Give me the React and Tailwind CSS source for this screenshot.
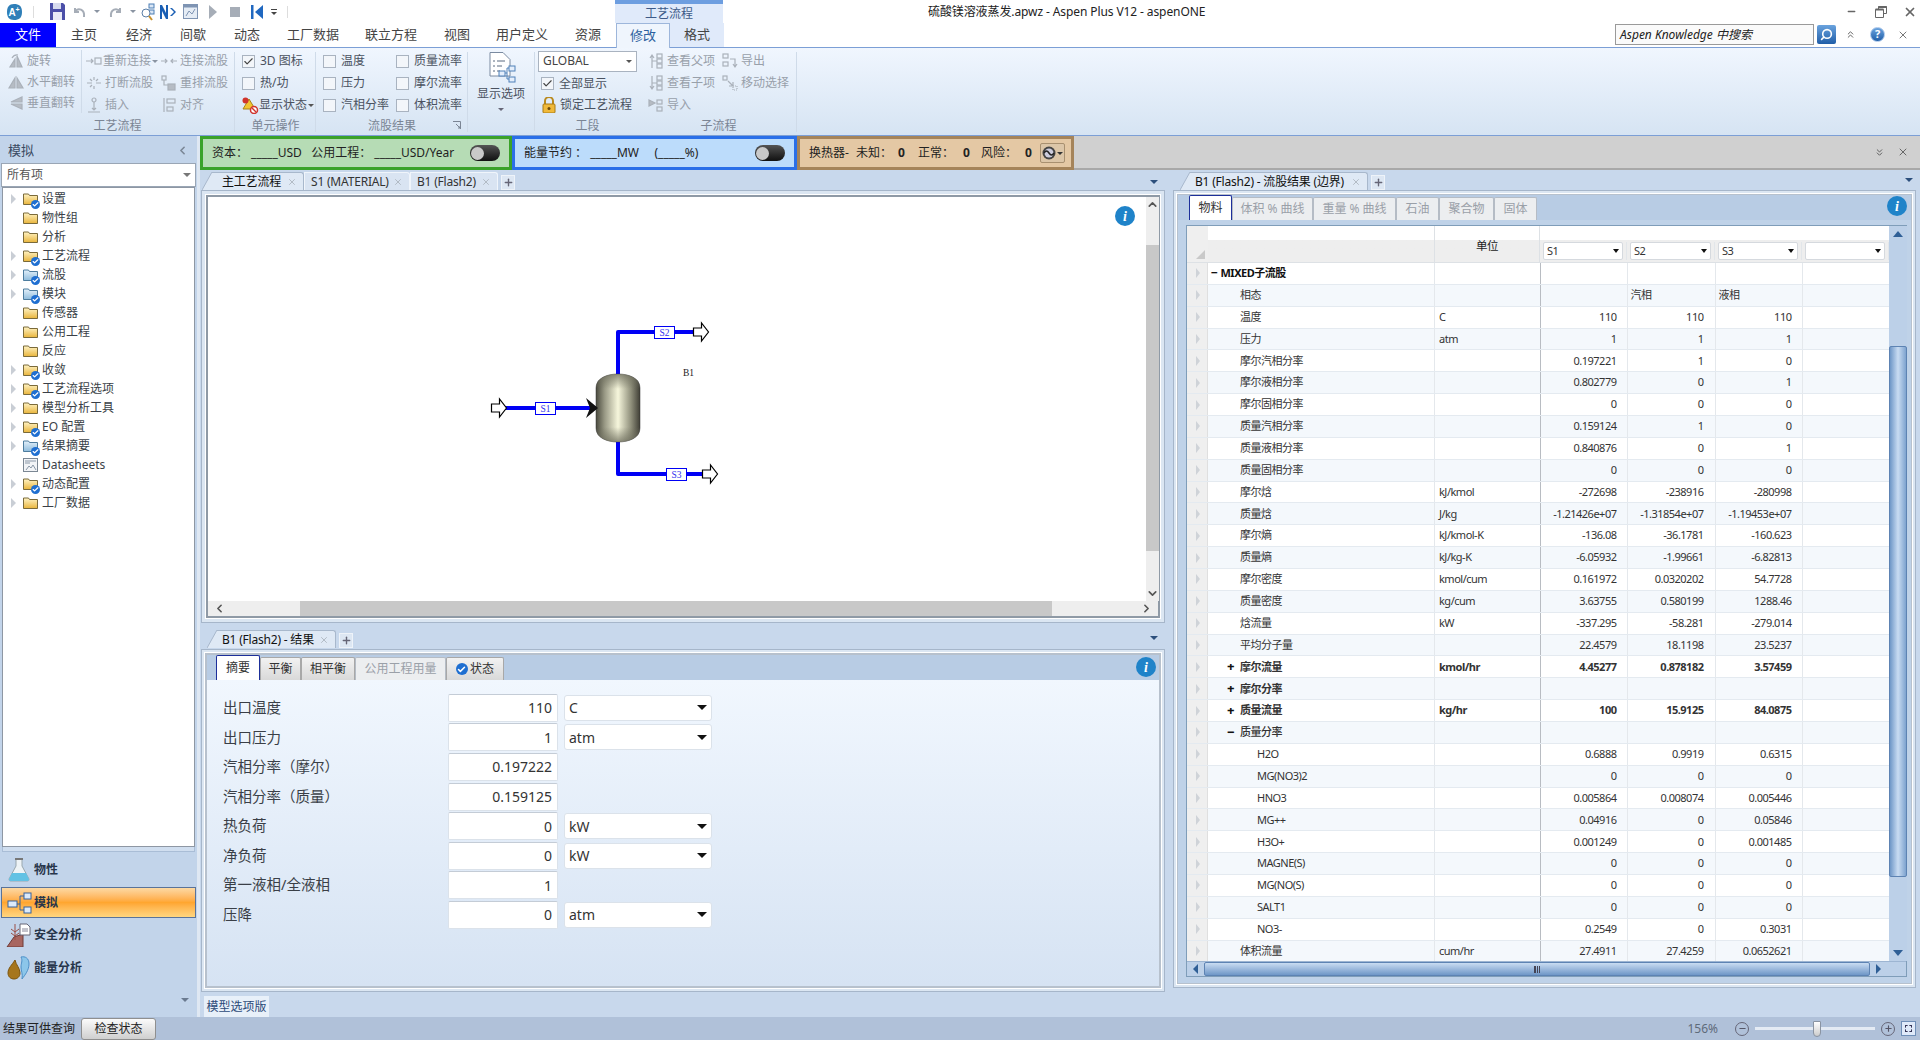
import React from "react";
import { Check, ChevronDown, ChevronUp, ChevronLeft, ChevronRight, ChevronsUp, ChevronsDown, Minus, Plus, X, Search } from "lucide-react";

const G = ({ children, s = 16, className = "" }) => (
  <svg width={s} height={s} viewBox="0 0 16 16" fill="none" stroke="#aab1ba" strokeWidth="1.2" className={`shrink-0 ${className}`}>{children}</svg>
);

const icons = {
  rotate: <G><path d="M2 14h5V6zM14 14H9V3z" fill="#b6bcc4" /><path d="M4 5a6 6 0 0 1 6-3" /></G>,
  flipH: <G><path d="M7 14H1l6-10zM9 14h6L9 4z" fill="#b6bcc4" /></G>,
  flipV: <G><path d="M14 7V2L3 7zM14 9v5L3 9z" fill="#b6bcc4" /></G>,
  reconnect: <G><path d="M0 8h7M5 6l2 2-2 2" /><rect x="9" y="5" width="6" height="6" /></G>,
  connect: <G><path d="M0 8h6M4 6l2 2-2 2M16 8h-6M12 6l-2 2 2 2" /></G>,
  brk: <G><path d="M1 8h5M10 8h5M8 2v3M8 11v3M4 4l2 2M12 4l-2 2M4 12l2-2" /></G>,
  reorder: <G><rect x="1" y="1" width="4" height="4" /><rect x="7" y="9" width="7" height="6" fill="#b6bcc4" /><path d="M3 5v5h4" /></G>,
  insert: <G><circle cx="8" cy="3" r="2" /><path d="M8 5v8M6 11l2 2 2-2M2 15h12" /></G>,
  align: <G><path d="M3 1v14" /><rect x="6" y="2" width="8" height="4" /><rect x="6" y="10" width="6" height="4" /></G>,
  parent: <G><rect x="9" y="1" width="5" height="4" /><rect x="9" y="6" width="5" height="4" /><rect x="9" y="11" width="5" height="4" /><path d="M4 15V3M2 5l2-3 2 3M4 8h5" /></G>,
  child: <G><rect x="9" y="1" width="5" height="4" /><rect x="9" y="6" width="5" height="4" /><rect x="9" y="11" width="5" height="4" /><path d="M4 1v13M2 11l2 3 2-3M4 8h5" /></G>,
  imp: <G><path d="M1 3l6 3-6 3z" fill="#b6bcc4" /><rect x="9" y="3" width="5" height="4" /><rect x="9" y="10" width="5" height="4" /></G>,
  exp: <G><rect x="1" y="1" width="5" height="4" /><rect x="1" y="9" width="5" height="4" /><path d="M8 6h5v7M11 11l2 3 2-3" /></G>,
  move: <G><rect x="1" y="1" width="4" height="4" /><path d="M6 6l5 5M11 7v4H7" /><rect x="11" y="11" width="4" height="4" strokeDasharray="1 1" /></G>,
};

const Item = ({ icon, label, w }) => (
  <div className="h-[22px] flex items-center gap-[3px] text-[12px] text-[#98a0aa] whitespace-nowrap">
    <span className={`flex justify-center ${w || "w-[16px]"}`}>{icons[icon]}</span>
    <span>{label}</span>
  </div>
);

const Cb = ({ checked, label, gap = "gap-[5px]" }) => (
  <div className={`h-[22px] flex items-center ${gap} text-[12px] text-[#4a5260] whitespace-nowrap`}>
    <span className="w-[13px] h-[13px] border border-[#a9b3c0] bg-[#f3f6fa] flex items-center justify-center shrink-0">
      {checked && <Check size={11} strokeWidth={2.5} color="#444" />}
    </span>
    <span>{label}</span>
  </div>
);

const Group = ({ w, label, children, last, dialog }) => (
  <div className={`${w} shrink-0 flex flex-col h-full relative`}>
    <div className="h-[68px] pt-[2px] flex">{children}</div>
    <div className="h-[19px] flex items-center justify-center text-[12px] text-[#7b8594]">{label}</div>
    {!last && <div className="absolute right-0 top-[4px] bottom-[3px] w-px bg-[#cfdbe9]" />}
    {dialog && <svg width="8" height="8" viewBox="0 0 8 8" className="absolute right-[7px] bottom-[6px]"><path d="M0 .5h7.5V8M3 3l4 4M5 7h2V5" fill="none" stroke="#7b8594" /></svg>}
  </div>
);

const QatCaret = ({ c = "#8a94a2", cls = "" }) => <span className={`w-0 h-0 border-x-[3px] border-x-transparent border-t-[3px] ${cls}`} style={{ borderTopColor: c }} />;

function TitleBar() {
  return (
    <div className="h-[23px] flex items-center shrink-0 bg-white relative">
      <svg width="18" height="18" viewBox="0 0 18 18" className="ml-[5px]"><path d="M9 1c5 0 8 2 8 8s-3 8-8 8-7-3-7-8 2-8 7-8z" fill="#2f7fb8" /><text x="3.5" y="13" fontSize="10" fontWeight="700" fill="#fff" fontFamily="Liberation Sans">A</text><text x="10.5" y="9" fontSize="7" fontWeight="700" fill="#fff" fontFamily="Liberation Sans">+</text></svg>
      <span className="w-px h-[12px] bg-[#ddd] ml-[10px]" />
      <svg width="15" height="17" viewBox="0 0 15 17" className="ml-[16px]"><path d="M0 0h13l2 2v15H0z" fill="#4b4fa8" /><rect x="3" y="0" width="8" height="6" fill="#d7dbee" /><rect x="3" y="9" width="9" height="8" fill="#e8eaf6" /></svg>
      <svg width="13" height="13" viewBox="0 0 13 13" className="ml-[8px]"><path d="M2 3v4h4M2 7c3-5 10-3 9 5" fill="none" stroke="#a6adb7" strokeWidth="2" /></svg>
      <QatCaret cls="ml-[8px]" />
      <svg width="13" height="13" viewBox="0 0 13 13" className="ml-[9px]"><path d="M11 3v4H7M11 7C8 2 1 4 2 12" fill="none" stroke="#a6adb7" strokeWidth="2" /></svg>
      <QatCaret cls="ml-[8px]" />
      <svg width="16" height="18" viewBox="0 0 16 18" className="ml-[4px]"><rect x="9" y="1" width="5" height="4" fill="#dbe7f5" stroke="#4d7fb5" /><rect x="9" y="7" width="5" height="4" fill="#dbe7f5" stroke="#4d7fb5" /><circle cx="6" cy="10" r="4" fill="#fff" stroke="#5b7fa8" /><path d="M9 13l3 4" stroke="#c9922e" strokeWidth="2" /></svg>
      <svg width="17" height="16" viewBox="0 0 17 16" className="ml-[3px]"><path d="M1 15V1h2l4 8V1h2v14H7L3 7v8zM11 4h2l4 4-4 4h-2l4-4z" fill="#1a5fb4" /></svg>
      <svg width="15" height="15" viewBox="0 0 15 15" className="ml-[7px]"><rect x=".5" y=".5" width="14" height="14" fill="#e5ecf5" stroke="#7f94b3" /><rect x=".5" y=".5" width="14" height="3" fill="#7f94b3" /><path d="M3 12l3-5 3 3 3-5" fill="none" stroke="#7f94b3" /></svg>
      <span className="w-0 h-0 border-y-[7px] border-y-transparent border-l-[8px] border-l-[#a6adb7] ml-[11px]" />
      <span className="w-[10px] h-[10px] bg-[#a6adb7] ml-[13px]" />
      <svg width="12" height="14" viewBox="0 0 12 14" className="ml-[11px]"><path d="M0 0h2.500v14H0zM12 0v14L4 7z" fill="#2068c0" /></svg>
      <span className="ml-[8px] flex flex-col items-center gap-[2px]"><span className="w-[6px] h-px bg-[#444]" /><QatCaret c="#444" /></span>
      <span className="w-px h-[12px] bg-[#ddd] ml-[10px]" />
      <div className="ml-[327px] w-[108px] h-[23px] flex flex-col shrink-0">
        <div className="h-[4px] bg-[#6d9ee0]" />
        <div className="flex-1 bg-[#e0eafa] flex items-center justify-center text-[12px] text-[#3d5a88]">工艺流程</div>
      </div>
      <div className="ml-[205px] text-[12px] text-[#222] whitespace-nowrap tracking-[-0.1px]">硫酸镁溶液蒸发.apwz - Aspen Plus V12 - aspenONE</div>
      <div className="ml-auto flex items-center pr-[3px]">
        <Minus size={11} strokeWidth={3} color="#666" />
        <svg width="12" height="12" viewBox="0 0 12 12" className="ml-[18px]"><path d="M3.500 3V.5h8v7H9M.5 3.500h8v8h-8z" fill="none" stroke="#666" /><path d="M.5 3.500h8M3.500 1h8" stroke="#666" strokeWidth="2" /></svg>
        <X size={14} strokeWidth={3} color="#666" className="ml-[16px]" />
      </div>
    </div>
  );
}

function MenuTabs() {
  const tabs = [["主页", "w-[56px]"], ["经济", "w-[54px]"], ["间歇", "w-[54px]"], ["动态", "w-[54px]"], ["工厂数据", "w-[78px]"], ["联立方程", "w-[78px]"], ["视图", "w-[54px]"], ["用户定义", "w-[76px]"], ["资源", "w-[56px]"]];
  return (
    <div className="h-[25px] flex shrink-0 bg-white border-b border-[#7c9fd6] relative">
      <div className="w-[56px] bg-[#0000ff] text-white text-[13px] flex items-center justify-center">文件</div>
      {tabs.map(([t, w]) => <div key={t} className={`${w} shrink-0 flex items-center justify-center text-[13px] text-[#444]`}>{t}</div>)}
      <div className="w-[54px] h-[25px] bg-[#eff5fd] border border-b-0 border-[#9db6db] text-[13px] text-[#2c5f9e] flex items-center justify-center">修改</div>
      <div className="w-[54px] h-[24px] bg-[#e0eafa] text-[13px] text-[#444] flex items-center justify-center">格式</div>
      <div className="ml-auto flex items-center mb-[1px]">
        <div className="w-[199px] h-[21px] border border-[#9a9a9a] bg-[#fafafa] text-[12px] italic text-[#222] flex items-center pl-[4px]">Aspen Knowledge 中搜索</div>
        <div className="w-[19px] h-[19px] ml-[3px] rounded-[2px] bg-gradient-to-b from-[#6aa3de] to-[#1f5ea8] flex items-center justify-center"><Search size={13} strokeWidth={3} color="#fff" className="-scale-x-100" /></div>
        <ChevronsUp size={11} color="#555" className="ml-[9px]" />
        <div className="w-[15px] h-[15px] ml-[14px] rounded-full bg-gradient-to-b from-[#6aa3de] to-[#1f5ea8] border border-[#a8c5ea] text-white text-[11px] font-bold flex items-center justify-center">?</div>
        <X size={12} strokeWidth={2} color="#777" className="ml-[12px] mr-[11px]" />
      </div>
    </div>
  );
}

function Ribbon() {
  return (
    <div className="h-[88px] shrink-0 flex bg-gradient-to-b from-[#f0f6fe] to-[#d6e4f3] border-b border-[#7c9fd6]">
      <Group w="w-[235px]" label="工艺流程">
        <div className="pl-[8px] w-[82px] shrink-0 flex flex-col border-r border-[#cfdbe9] mb-[3px]">
          <Item icon="rotate" label="旋转" /><Item icon="flipH" label="水平翻转" /><Item icon="flipV" label="垂直翻转" />
        </div>
        <div className="pl-[4px] w-[78px] flex flex-col shrink-0">
          <div className="h-[22px] flex items-center text-[12px] text-[#98a0aa] whitespace-nowrap">{icons.reconnect}<span className="ml-[1px]">重新连接</span><QatCaret cls="ml-[1px]" /></div>
          <Item icon="brk" label="打断流股" /><Item icon="insert" label="插入" />
        </div>
        <div className="flex flex-col">
          <Item icon="connect" label="连接流股" w="w-[17px]" /><Item icon="reorder" label="重排流股" w="w-[17px]" /><Item icon="align" label="对齐" w="w-[17px]" />
        </div>
      </Group>
      <Group w="w-[81px]" label="单元操作">
        <div className="pl-[7px] flex flex-col">
          <Cb checked label="3D 图标" /><Cb label="热/功" />
          <div className="h-[22px] flex items-center text-[12px] text-[#4a5260] whitespace-nowrap">
            <svg width="17" height="17" viewBox="0 0 17 17" className="shrink-0"><path d="M7 2l6 10H1z" fill="#f2c531" stroke="#a8841a" /><circle cx="3.5" cy="3.5" r="3" fill="#d0342c" /><circle cx="12" cy="13" r="3.5" fill="#fff" stroke="#d0342c" strokeWidth="1.5" /><path d="M10 11l4 4" stroke="#d0342c" strokeWidth="1.5" /></svg>
            <span>显示状态</span><QatCaret cls="ml-[1px]" c="#555" />
          </div>
        </div>
      </Group>
      <Group w="w-[152px]" label="流股结果" dialog>
        <div className="pl-[7px] w-[80px] flex flex-col shrink-0"><Cb label="温度" /><Cb label="压力" /><Cb label="汽相分率" /></div>
        <div className="flex flex-col"><Cb label="质量流率" /><Cb label="摩尔流率" /><Cb label="体积流率" /></div>
      </Group>
      <Group w="w-[66px]" last label="">
        <div className="w-full flex flex-col items-center text-[12px] text-[#4a5260]">
          <svg width="30" height="32" viewBox="0 0 30 32" className="mt-[2px]"><path d="M4 .5h13l7 7V24H4z" fill="#fff" stroke="#7a8aa0" /><path d="M7 9h2M7 14h2M7 19h2M11 9h8M11 14h5M11 19h3" stroke="#5b6b80" /><rect x="13" y="19" width="6" height="5" fill="#e4eefb" stroke="#4f80b8" /><rect x="23" y="14" width="6" height="5" fill="#e4eefb" stroke="#4f80b8" /><rect x="23" y="25" width="6" height="5" fill="#e4eefb" stroke="#4f80b8" /><path d="M19 21h2v-5h2M21 21v6h2" fill="none" stroke="#4f80b8" /></svg>
          <span className="mt-[3px] leading-[14px]">显示选项</span>
          <QatCaret cls="mt-[7px]" c="#667" />
        </div>
      </Group>
      <div className="w-px bg-[#cfdbe9] my-[4px]" />
      <Group w="w-[105px]" last label="工段">
        <div className="flex flex-col pl-[3px]">
          <div className="w-[99px] h-[21px] mt-[1px] border border-[#a9b3c0] bg-white flex items-center justify-between px-[4px] text-[12px] text-[#444]"><span>GLOBAL</span><QatCaret c="#555" /></div>
          <div className="pl-[3px] mt-[1px]"><Cb checked label="全部显示" /></div>
          <div className="h-[22px] pl-[4px] flex items-center gap-[4px] text-[12px] text-[#4a5260] whitespace-nowrap">
            <svg width="14" height="16" viewBox="0 0 14 16"><path d="M3 7V4a4 4 0 0 1 8 0v3" fill="none" stroke="#b98a1e" strokeWidth="2" /><rect x="1" y="7" width="12" height="9" rx="1" fill="#f0b93a" stroke="#a97a14" /><circle cx="7" cy="11.5" r="1.5" fill="#6b4a0a" /></svg>
            <span>锁定工艺流程</span>
          </div>
        </div>
      </Group>
      <Group w="w-[157px]" label="子流程">
        <div className="pl-[8px] w-[82px] flex flex-col shrink-0"><Item icon="parent" label="查看父项" /><Item icon="child" label="查看子项" /><Item icon="imp" label="导入" /></div>
        <div className="flex flex-col"><Item icon="exp" label="导出" /><Item icon="move" label="移动选择" /></div>
      </Group>
    </div>
  );
}

const Folder = ({ blue, badge }) => (
  <span className="relative w-[16px] h-[14px] shrink-0">
    <svg width="15" height="12" viewBox="0 0 15 12" className="mt-[1px]">
      <defs>
        <linearGradient id="fy" x1="0" y1="0" x2="0" y2="1"><stop offset="0" stopColor="#fff3c4" /><stop offset="1" stopColor="#e9b53c" /></linearGradient>
        <linearGradient id="fb" x1="0" y1="0" x2="0" y2="1"><stop offset="0" stopColor="#e3f0fa" /><stop offset="1" stopColor="#8fbcdc" /></linearGradient>
      </defs>
      <path d="M.5 2V1h5l1 1.5h8V11.5H.5z" fill={blue ? "url(#fb)" : "url(#fy)"} stroke={blue ? "#4d7c9e" : "#7a6a3a"} />
    </svg>
    {badge ? <span className="absolute right-[-1px] bottom-[-3px] w-[9px] h-[9px] rounded-full bg-[#1f6fd1] flex items-center justify-center"><Check size={7} strokeWidth={4} color="#fff" /></span> : null}
  </span>
);

function Tree() {
  const items = [["设置", 1, 0, 1], ["物性组", 0, 0, 0], ["分析", 0, 0, 0], ["工艺流程", 1, 0, 1], ["流股", 1, 1, 1], ["模块", 1, 1, 1], ["传感器", 0, 0, 0], ["公用工程", 0, 0, 0], ["反应", 0, 0, 0], ["收敛", 1, 0, 1], ["工艺流程选项", 1, 0, 1], ["模型分析工具", 1, 0, 0], ["EO 配置", 1, 0, 1], ["结果摘要", 1, 1, 1], ["Datasheets", 0, 2, 0], ["动态配置", 1, 0, 1], ["工厂数据", 1, 0, 0]];
  return (
    <div className="mx-[2px] h-[660px] bg-white border border-[#8e97a3] pt-[1px] shrink-0">
      {items.map(([t, exp, kind, badge]) => (
        <div key={t} className="h-[19px] flex items-center text-[12px] text-[#3a3f47]">
          <span className="w-[20px] pl-[8px] shrink-0">{exp ? <span className="block w-0 h-0 border-y-[5px] border-y-transparent border-l-[5px] border-l-[#c9ced5]" /> : null}</span>
          {kind === 2 ? (
            <svg width="15" height="14" viewBox="0 0 15 14" className="mr-[4px]"><rect x=".5" y=".5" width="14" height="13" fill="#f2f4f7" stroke="#7b8794" /><path d="M2 3h11M2 5h5M3 12l3-4 2 2 2-3 3 5" stroke="#8a98a8" fill="none" /></svg>
          ) : <span className="mr-[3px] flex"><Folder blue={kind === 1} badge={badge} /></span>}
          <span>{t}</span>
        </div>
      ))}
    </div>
  );
}

const NavRow = ({ icon, label, active, h = "h-[33px]" }) => (
  <div className={`mx-[1px] flex items-center text-[12px] font-semibold text-[#27354a] ${active ? "border border-[#5a7399] bg-gradient-to-b from-[#fcd9a3] via-[#ffa62f] to-[#ffd67f] h-[31px]" : h}`}>
    <span className="w-[32px] pl-[4px] shrink-0 flex justify-center">{icon}</span>
    <span className={active ? "" : "ml-[1px]"}>{label}</span>
  </div>
);

function LeftPanel() {
  return (
    <div className="w-[197px] shrink-0 flex flex-col bg-[#c2d4ea]">
      <div className="h-[27px] flex items-center justify-between pl-[8px] pr-[8px] pt-[2px] text-[13px] text-[#3a4a62] shrink-0">
        <span>模拟</span><ChevronLeft size={13} strokeWidth={3} color="#7b8796" />
      </div>
      <div className="mx-[1px] h-[24px] bg-white border border-[#9aa6b5] flex items-center justify-between pl-[5px] pr-[4px] text-[12px] text-[#555] shrink-0">
        <span>所有项</span><QatCaret c="#777" cls="border-x-[4px] border-t-[4px]" />
      </div>
      <Tree />
      <div className="h-[5px] mx-[2px] border border-[#a9bdd6] border-t-0 bg-[#d0deef] shrink-0" />
      <div className="flex flex-col">
        <NavRow h="h-[35px]" label="物性" icon={<svg width="22" height="24" viewBox="0 0 22 24"><path d="M8 1h6v7l7 13c0 2-1 2-2 2H3c-1 0-2 0-2-2L8 8z" fill="#eef3f6" stroke="#9aa7ae" /><path d="M4 15h14l3 6c0 2-1 2-2 2H3c-1 0-2 0-2-2z" fill="#63c2e4" /><path d="M7 1h8" stroke="#777" strokeWidth="2" /></svg>} />
        <NavRow active label="模拟" icon={<svg width="26" height="24" viewBox="0 0 26 24"><rect x="1" y="10" width="9" height="6" fill="#dceafa" stroke="#36629c" /><rect x="17" y="2" width="7" height="6" fill="#dceafa" stroke="#36629c" /><rect x="17" y="16" width="7" height="6" fill="#dceafa" stroke="#36629c" /><path d="M10 13h3V5h4M13 13v6h4" fill="none" stroke="#36629c" /></svg>} />
        <NavRow label="安全分析" icon={<svg width="26" height="24" viewBox="0 0 26 24"><path d="M1 24l7-10 9-3v13z" fill="#a86660" stroke="#6e3a36" /><path d="M9 1v16M5 6l4 3 4-3M5 10l4 3 4-3" stroke="#9a4e46" fill="none" /><path d="M14 1h7l3 3v8H14z" fill="#fff" stroke="#667" /><path d="M16 6h6M16 8h6" stroke="#889" /></svg>} />
        <NavRow label="能量分析" icon={<svg width="24" height="24" viewBox="0 0 24 24"><path d="M8 4C5 9 1 12 1 17c0 4 3 6 6 6s6-2 6-6c0-5-4-8-5-13z" fill="#a6761d" stroke="#7d5610" /><path d="M14 1c4-1 8 1 8 7 0 6-4 11-7 15 1-5-1-8-1-12 0-4 2-6 0-10z" fill="#8cc6ea" stroke="#4d90c8" /></svg>} />
      </div>
      <div className="mt-auto mb-[15px] pr-[8px] flex justify-end"><QatCaret c="#6a7a90" cls="border-x-[4px] border-t-[4px]" /></div>
    </div>
  );
}

const Toggle = () => (
  <span className="w-[30px] h-[16px] rounded-full bg-gradient-to-b from-[#555] to-[#111] flex items-center pl-[1px] shrink-0">
    <span className="w-[13px] h-[13px] rounded-full bg-[#c9c9c9]" />
  </span>
);

function Dashboard() {
  return (
    <div className="h-[34px] shrink-0 flex text-[12px] text-[#222] whitespace-pre">
      <div className="w-[312px] border-[3px] border-[#3aa22a] bg-[#b6dcb5] flex items-center pl-[9px] pr-[9px] justify-between">
        <span>资本： _____USD   公用工程： _____USD/Year</span><Toggle />
      </div>
      <div className="w-[285px] border-[3px] border-[#2a6fe8] bg-[#bcdcfb] flex items-center pl-[9px] pr-[9px] justify-between">
        <span>能量节约 ： _____MW     (_____%)</span><Toggle />
      </div>
      <div className="w-[277px] border-[3px] border-[#a5845a] bg-[#e4c8a4] flex items-center pl-[9px]">
        <span className="w-[47px]">换热器-</span>
        <span className="w-[42px]">未知：</span><b className="w-[20px]">0</b>
        <span className="w-[45px]">正常：</span><b className="w-[18px]">0</b>
        <span className="w-[44px]">风险：</span><b className="w-[15px]">0</b>
        <span className="w-[25px] h-[20px] rounded-[2px] border border-[#a89070] bg-[#dcc6a8] flex items-center justify-center gap-[1px]">
          <svg width="14" height="14" viewBox="0 0 14 14"><circle cx="7" cy="7" r="6.500" fill="#444" /><circle cx="7" cy="7" r="4.500" fill="#ccd" /><path d="M2 7q2.500-4 5 0t5 0" fill="none" stroke="#222" strokeWidth="1.5" /></svg>
          <QatCaret c="#333" />
        </span>
      </div>
      <div className="flex-1 bg-[#d0d0d0] border-b-2 border-[#a8a8a8] flex items-center justify-end pr-[11px] gap-[12px]">
        <ChevronsDown size={11} color="#555" /><X size={12} strokeWidth={2} color="#666" />
      </div>
    </div>
  );
}

const DocTab = ({ label, w, active, pad = "pl-[6px]" }) => (
  <>
    {active && <svg width="10" height="18" viewBox="0 0 10 18" className="shrink-0"><path d="M0 18L10 0V18z" fill="#dfe9f5" /><path d="M0 18L10 0" stroke="#a8b8cc" /></svg>}
    <div className={`${w} h-[18px] shrink-0 flex items-center justify-between ${pad} pr-[6px] text-[12px] border border-b-0 rounded-tr-[3px] whitespace-nowrap tracking-[-0.2px] ${active ? "bg-[#dfe9f5] border-[#a8b8cc] border-l-0 text-[#111]" : "bg-[#d9e4f2] border-[#f0f5fb] text-[#333]"}`}>
      <span>{label}</span><X size={10} strokeWidth={2} color="#aab2bc" />
    </div>
  </>
);

const PlusTab = () => (
  <div className="w-[14px] h-[15px] ml-[3px] bg-[#dde7f3] border border-[#eef3f9] flex items-center justify-center"><Plus size={11} strokeWidth={3} color="#667" /></div>
);

const SubTab = ({ label, w, active, disabled, icon }) => (
  <div className={`${w} shrink-0 flex items-center justify-center gap-[2px] text-[12px] border border-b-0 rounded-t-[2px] ${active ? "h-[25px] bg-white border-[#1d2f9a] text-[#333]" : disabled ? "h-[23px] self-end bg-[#eceef0] border-[#b5bcc5] text-[#9aa0a8]" : "h-[23px] self-end bg-gradient-to-b from-[#f2f2f2] to-[#d9d9d9] border-[#a8a8a8] text-[#333]"}`}>
    {icon}{label}
  </div>
);

const InfoDot = ({ cls = "" }) => (
  <span className={`w-[20px] h-[20px] rounded-full bg-[#1f83c9] text-white italic font-bold text-[14px] flex items-center justify-center [font-family:'Liberation_Serif',serif] ${cls}`}>i</span>
);

const Flow = () => (
  <svg width="938" height="403" viewBox="207 197 938 403" className="block">
    <defs>
      <linearGradient id="ves" x1="0" y1="0" x2="1" y2="0">
        <stop offset="0" stopColor="#4a4a3e" /><stop offset=".2" stopColor="#9a9a86" /><stop offset=".5" stopColor="#f6f6dc" /><stop offset=".8" stopColor="#8e8e7a" /><stop offset="1" stopColor="#403f36" />
      </linearGradient>
      <linearGradient id="cap" x1="0" y1="0" x2="0" y2="1">
        <stop offset="0" stopColor="#6a6a5a" stopOpacity=".75" /><stop offset=".22" stopColor="#6a6a5a" stopOpacity="0" /><stop offset=".78" stopColor="#6a6a5a" stopOpacity="0" /><stop offset="1" stopColor="#6a6a5a" stopOpacity=".75" />
      </linearGradient>
    </defs>
    <g stroke="#0000f5" strokeWidth="4" fill="none" strokeLinejoin="round">
      <path d="M503 408H595" /><path d="M617 376V332H692" /><path d="M617 440V474H701" />
    </g>
    <path d="M595 388C595 378 606 374 617 374C628 374 639 378 639 388V428C639 438 628 442 617 442C606 442 595 438 595 428Z" fill="url(#ves)" stroke="#333" strokeWidth=".5" />
    <path d="M595 388C595 378 606 374 617 374C628 374 639 378 639 388V428C639 438 628 442 617 442C606 442 595 438 595 428Z" fill="url(#cap)" />
    <path d="M585 398l12 10-12 10 4-10z" fill="#111" />
    <path d="M490.500 404h8v-5l7 9-7 9v-5h-8z M692.500 328h8v-5l7 9-7 9v-5h-8z M701.500 470h8v-5l7 9-7 9v-5h-8z" fill="#fff" stroke="#000" strokeWidth="1.2" />
    {[["S1", 534, 402], ["S2", 653, 326], ["S3", 665, 468]].map(([t, x, y]) => (
      <g key={t}>
        <rect x={x + .5} y={y + .5} width="20" height="12" fill="#fff" stroke="#0000f5" />
        <text x={x + 10.500} y={y + 10} textAnchor="middle" fontSize="9.500" fill="#3333ee" fontFamily="Liberation Serif">{t}</text>
      </g>
    ))}
    <text x="682" y="376" fontSize="9.500" fill="#222" fontFamily="Liberation Serif">B1</text>
  </svg>
);

function CenterCol() {
  const rows = [["出口温度", "110", "C"], ["出口压力", "1", "atm"], ["汽相分率（摩尔）", "0.197222"], ["汽相分率（质量）", "0.159125"], ["热负荷", "0", "kW"], ["净负荷", "0", "kW"], ["第一液相/全液相", "1"], ["压降", "0", "atm"]];
  return (
    <div className="w-[967px] shrink-0 flex flex-col">
      <div className="h-[20px] flex items-end pl-[2px] shrink-0 relative">
        <DocTab label="主工艺流程" w="w-[92px]" active pad="pl-[10px]" />
        <DocTab label="S1 (MATERIAL)" w="w-[106px]" />
        <DocTab label="B1 (Flash2)" w="w-[88px]" />
        <PlusTab />
        <QatCaret c="#2c4f7c" cls="ml-auto mr-[9px] mb-[6px] border-x-[4px] border-t-[4px]" />
      </div>
      <div className="ml-px w-[964px] h-[433px] border border-[#a6b6ca] bg-[#dbe6f2] p-[4px] shrink-0">
        <div className="h-full border-2 border-[#8f9aa6] outline outline-1 outline-white flex flex-col bg-[#eee]">
          <div className="flex h-[404px] shrink-0">
            <div className="w-[938px] bg-white relative shrink-0">
              <Flow />
              <InfoDot cls="absolute right-[11px] top-[9px]" />
            </div>
            <div className="w-[16px] flex flex-col items-center justify-between py-[1px] bg-[#eeeeee]">
              <ChevronUp size={13} strokeWidth={3} color="#555" />
              <div className="w-full h-[306px] mt-[16px] mb-[18px] bg-[#c8c8c8]" />
              <ChevronDown size={13} strokeWidth={3} color="#555" />
            </div>
          </div>
          <div className="flex-1 flex items-center justify-between px-[5px] relative">
            <ChevronLeft size={13} strokeWidth={3} color="#555" />
            <div className="absolute left-[92px] w-[752px] top-0 bottom-0 bg-[#c8c8c8]" />
            <ChevronRight size={13} strokeWidth={3} color="#555" />
          </div>
        </div>
      </div>
      <div className="h-[26px] flex items-end pl-[7px] shrink-0 relative pb-[1px]">
        <DocTab label="B1 (Flash2) - 结果" w="w-[119px]" active pad="pl-[5px]" />
        <PlusTab />
        <QatCaret c="#2c4f7c" cls="ml-auto mr-[9px] mb-[8px] border-x-[4px] border-t-[4px]" />
      </div>
      <div className="ml-px w-[964px] h-[343px] border border-[#a6b6ca] bg-[#dbe6f2] p-[3px] shrink-0">
        <div className="h-full border-2 border-[#b7c1cd] outline outline-1 outline-white flex flex-col">
          <div className="h-[25px] shrink-0 bg-[#b8cce4] flex pl-[9px] relative">
            <SubTab label="摘要" w="w-[44px]" active />
            <SubTab label="平衡" w="w-[41px]" />
            <SubTab label="相平衡" w="w-[54px]" />
            <SubTab label="公用工程用量" w="w-[91px]" disabled />
            <SubTab label="状态" w="w-[58px]" icon={<span className="w-[12px] h-[12px] rounded-full bg-[#1f6fd1] flex items-center justify-center"><Check size={9} strokeWidth={4} color="#fff" /></span>} />
            <InfoDot cls="absolute right-[3px] top-[2px]" />
          </div>
          <div className="flex-1 bg-gradient-to-b from-[#f1f7fe] to-[#d6e3f3] pt-[13px] pl-[16px]">
            {rows.map(([l, v, u]) => (
              <div key={l} className="h-[29.600px] flex items-center">
                <div className="w-[225px] text-[14.500px] text-[#3a3f47] whitespace-nowrap">{l}</div>
                <div className="w-[110px] h-[28px] bg-white border border-[#dbe2ea] border-t-[#c4ccd6] rounded-[2px] flex items-center justify-end pr-[5px] text-[14px] text-[#333]">{v}</div>
                {u && (
                  <div className="w-[148px] h-[26px] ml-[6px] bg-white border border-[#dbe2ea] rounded-[3px] flex items-center justify-between pl-[4px] pr-[4px] text-[14px] text-[#333]">
                    <span>{u}</span><QatCaret c="#111" cls="border-x-[5px] border-t-[5px]" />
                  </div>
                )}
              </div>
            ))}
          </div>
        </div>
      </div>
      <div className="h-[25px] flex items-end pl-[4px]">
        <div className="w-[65px] h-[21px] bg-[#e8f0f9] text-[12px] text-[#2c4a78] flex items-center justify-center">模型选项版</div>
      </div>
    </div>
  );
}

const tableRows = [
  { n: "MIXED子流股", t: "m" },
  { n: "相态", s2: "汽相", s3: "液相", left: 1 },
  { n: "温度", u: "C", a: "110", b: "110", c: "110" },
  { n: "压力", u: "atm", a: "1", b: "1", c: "1" },
  { n: "摩尔汽相分率", a: "0.197221", b: "1", c: "0" },
  { n: "摩尔液相分率", a: "0.802779", b: "0", c: "1" },
  { n: "摩尔固相分率", a: "0", b: "0", c: "0" },
  { n: "质量汽相分率", a: "0.159124", b: "1", c: "0" },
  { n: "质量液相分率", a: "0.840876", b: "0", c: "1" },
  { n: "质量固相分率", a: "0", b: "0", c: "0" },
  { n: "摩尔焓", u: "kJ/kmol", a: "-272698", b: "-238916", c: "-280998" },
  { n: "质量焓", u: "J/kg", a: "-1.21426e+07", b: "-1.31854e+07", c: "-1.19453e+07" },
  { n: "摩尔熵", u: "kJ/kmol-K", a: "-136.08", b: "-36.1781", c: "-160.623" },
  { n: "质量熵", u: "kJ/kg-K", a: "-6.05932", b: "-1.99661", c: "-6.82813" },
  { n: "摩尔密度", u: "kmol/cum", a: "0.161972", b: "0.0320202", c: "54.7728" },
  { n: "质量密度", u: "kg/cum", a: "3.63755", b: "0.580199", c: "1288.46" },
  { n: "焓流量", u: "kW", a: "-337.295", b: "-58.281", c: "-279.014" },
  { n: "平均分子量", a: "22.4579", b: "18.1198", c: "23.5237" },
  { n: "摩尔流量", t: "+", u: "kmol/hr", a: "4.45277", b: "0.878182", c: "3.57459" },
  { n: "摩尔分率", t: "+" },
  { n: "质量流量", t: "+", u: "kg/hr", a: "100", b: "15.9125", c: "84.0875" },
  { n: "质量分率", t: "-" },
  { n: "H2O", l: 2, a: "0.6888", b: "0.9919", c: "0.6315" },
  { n: "MG(NO3)2", l: 2, a: "0", b: "0", c: "0" },
  { n: "HNO3", l: 2, a: "0.005864", b: "0.008074", c: "0.005446" },
  { n: "MG++", l: 2, a: "0.04916", b: "0", c: "0.05846" },
  { n: "H3O+", l: 2, a: "0.001249", b: "0", c: "0.001485" },
  { n: "MAGNE(S)", l: 2, a: "0", b: "0", c: "0" },
  { n: "MG(NO(S)", l: 2, a: "0", b: "0", c: "0" },
  { n: "SALT1", l: 2, a: "0", b: "0", c: "0" },
  { n: "NO3-", l: 2, a: "0.2549", b: "0", c: "0.3031" },
  { n: "体积流量", u: "cum/hr", a: "27.4911", b: "27.4259", c: "0.0652621" },
];

const HeadSel = ({ label, w }) => (
  <div className={`${w} shrink-0 px-[3px] border-r border-[#e2e6ea] flex items-center h-full`}>
    <div className="w-full h-[18px] bg-white border border-[#d5d9de] rounded-[2px] flex items-center justify-between pl-[3px] pr-[3px] text-[11px] text-[#333]">
      <span>{label}</span><QatCaret c="#111" cls="border-x-[3px] border-t-[4px]" />
    </div>
  </div>
);

function DataTable() {
  return (
    <div className="w-[721px] h-[752px] border border-[#7f9db9] bg-white flex flex-col tracking-[-0.5px] ml-[8px] mt-[5px]">
      <div className="flex flex-1 min-h-0">
        <div className="w-[702px] shrink-0 flex flex-col">
          <div className="h-[37px] shrink-0 flex bg-gradient-to-b from-white from-[40%] to-[#eeeeee] to-[40%] border-b border-[#dde1e5]">
            <div className="w-[21px] bg-[#efefef] shrink-0 flex items-end justify-end p-[3px]"><span className="w-0 h-0 border-b-[9px] border-b-[#c9c9c9] border-l-[9px] border-l-transparent" /></div>
            <div className="w-[227px] border-r border-[#dde1e5] shrink-0" />
            <div className="w-[105px] border-r border-[#dde1e5] shrink-0 flex justify-center pt-[11px] text-[11.500px] text-[#222]">单位</div>
            <div className="flex pt-[16px] pb-[2px] h-full">
              <HeadSel label="S1" w="w-[87px]" /><HeadSel label="S2" w="w-[88px]" /><HeadSel label="S3" w="w-[87px]" /><HeadSel label="" w="w-[87px]" />
            </div>
          </div>
          {tableRows.map((r, i) => {
            const bold = r.t === "+";
            return (
              <div key={r.n} className={`h-[21.870px] shrink-0 flex items-center text-[11px] text-[#333] border-b border-[#e4eaf0] ${i % 2 ? "bg-[#f4f8fc]" : "bg-white"} ${bold ? "font-bold text-[#111]" : ""}`}>
                <div className="w-[21px] h-full bg-[#efefef] border-r border-[#dfdfdf] shrink-0 flex items-center pl-[9px]"><span className="w-0 h-0 border-y-[5px] border-y-transparent border-l-[4px] border-l-[#cfd3d8]" /></div>
                <div className={`w-[227px] h-full shrink-0 border-r border-[#e4e8ec] flex items-center whitespace-nowrap ${r.t === "m" ? "pl-[3px] font-bold text-[#111]" : r.l === 2 ? "pl-[49px]" : r.t ? "pl-[19px]" : "pl-[32px]"}`}>
                  {r.t === "m" && <span className="mr-[3px] text-[12px] font-bold">−</span>}
                  {r.t === "+" && <span className="w-[9px] mr-[4px] text-[13px] font-extrabold text-[#111]">+</span>}
                  {r.t === "-" && <span className="w-[9px] mr-[4px] text-[13px] font-extrabold text-[#111]">−</span>}
                  <span className={r.t === "-" ? "font-medium" : ""}>{r.n}</span>
                </div>
                <div className="w-[105.500px] h-full shrink-0 pl-[4px] border-r border-[#b8bcc2] flex items-center whitespace-nowrap">{r.u}</div>
                {r.left ? (
                  <>
                    <div className="w-[87px] h-full shrink-0 border-r border-[#e4e8ec]" />
                    <div className="w-[88px] h-full shrink-0 pl-[3px] border-r border-[#e4e8ec] flex items-center">{r.s2}</div>
                    <div className="w-[87px] h-full shrink-0 pl-[3px] border-r border-[#e4e8ec] flex items-center">{r.s3}</div>
                  </>
                ) : (
                  <>
                    <div className="w-[87px] h-full shrink-0 pr-[10px] border-r border-[#e4e8ec] flex items-center justify-end whitespace-nowrap">{r.a}</div>
                    <div className="w-[88px] h-full shrink-0 pr-[11px] border-r border-[#e4e8ec] flex items-center justify-end whitespace-nowrap">{r.b}</div>
                    <div className="w-[87px] h-full shrink-0 pr-[10px] border-r border-[#e4e8ec] flex items-center justify-end whitespace-nowrap">{r.c}</div>
                  </>
                )}
              </div>
            );
          })}
        </div>
        <div className="w-[18px] shrink-0 bg-[#bcd0e8] flex flex-col items-center pt-[5px]">
          <span className="w-0 h-0 border-x-[5px] border-x-transparent border-b-[6px] border-b-[#2f5f96]" />
          <div className="w-full h-[531px] mt-[109px] shrink-0 rounded-[2px] border border-[#5d83b3] bg-gradient-to-r from-[#6f97c7] via-[#c9dcf2] to-[#7ea3cf]" />
          <span className="w-0 h-0 mt-[73px] border-x-[5px] border-x-transparent border-t-[6px] border-t-[#2f5f96]" />
        </div>
      </div>
      <div className="h-[15px] shrink-0 bg-[#bcd0e8] flex items-center border-t border-[#9db5d2] relative z-10">
        <span className="ml-[6px] w-0 h-0 border-y-[5px] border-y-transparent border-r-[5px] border-r-[#2f5f96]" />
        <div className="ml-[6px] w-[666px] h-[14px] rounded-[2px] border border-[#5d83b3] bg-gradient-to-b from-[#c9dcf2] to-[#6f97c7] flex items-center justify-center">
          <span className="w-[6px] h-[7px] border-x border-[#445] [background:repeating-linear-gradient(90deg,#445_0_1px,transparent_1px_2px)]" />
        </div>
        <span className="ml-[6px] w-0 h-0 border-y-[5px] border-y-transparent border-l-[5px] border-l-[#2f5f96]" />
      </div>
    </div>
  );
}

function RightCol() {
  return (
    <div className="flex-1 flex flex-col ml-[6px]">
      <div className="h-[20px] flex items-end pl-[7px] shrink-0">
        <DocTab label="B1 (Flash2) - 流股结果 (边界)" w="w-[178px]" active pad="pl-[5px]" />
        <PlusTab />
        <QatCaret c="#2c4f7c" cls="ml-auto mr-[7px] mb-[8px] border-x-[4px] border-t-[4px]" />
      </div>
      <div className="w-[743px] h-[798px] border border-[#a6b6ca] bg-[#dbe6f2] p-[3px] shrink-0">
        <div className="h-full border border-[#b7c1cd] outline outline-1 outline-white flex flex-col bg-[#bfd2e8]">
          <div className="h-[25px] shrink-0 bg-[#b8cce4] flex pl-[11px] relative">
            <SubTab label="物料" w="w-[43px]" active />
            <SubTab label="体积 % 曲线" w="w-[81px]" disabled />
            <SubTab label="重量 % 曲线" w="w-[83px]" disabled />
            <SubTab label="石油" w="w-[43px]" disabled />
            <SubTab label="聚合物" w="w-[55px]" disabled />
            <SubTab label="固体" w="w-[43px]" disabled />
            <InfoDot cls="absolute right-[4px] top-[1px]" />
          </div>
          <DataTable />
        </div>
      </div>
    </div>
  );
}

function StatusBar() {
  return (
    <div className="h-[23px] shrink-0 bg-[#b0c1d9] flex items-center text-[12px] text-[#222]">
      <span className="ml-[3px] w-[78px]">结果可供查询</span>
      <div className="w-[75px] h-[22px] border border-[#8f8f8f] rounded-[3px] bg-gradient-to-b from-[#fbfbfb] to-[#cfcfcf] flex items-center justify-center">检查状态</div>
      <div className="ml-auto flex items-center text-[#5f6b7a]">
        <span className="text-[12px]">156%</span>
        <span className="ml-[17px] w-[14px] h-[14px] rounded-full border border-[#667] flex items-center justify-center"><Minus size={9} strokeWidth={3} color="#556" /></span>
        <div className="ml-[6px] w-[120px] h-[3px] bg-[#e4ebf4] flex items-center">
          <span className="ml-[58px] w-[8px] h-[16px] rounded-b-[4px] rounded-t-[1px] border border-[#8a94a2] bg-gradient-to-b from-white to-[#ccc]" />
        </div>
        <span className="ml-[6px] w-[14px] h-[14px] rounded-full border border-[#667] flex items-center justify-center"><Plus size={9} strokeWidth={3} color="#556" /></span>
        <span className="ml-[6px] mr-[4px] w-[15px] h-[15px] border border-[#6f8fb8] bg-[#dfeafa] flex items-center justify-center"><span className="w-[7px] h-[7px] border border-dashed border-[#335]" /></span>
      </div>
    </div>
  );
}

export default function App() {
  return (
    <div className="w-[1920px] h-[1040px] flex flex-col overflow-hidden bg-[#c8d8ec] [font-family:'Noto_Sans','Noto_Sans_CJK_SC',sans-serif]">
      <TitleBar />
      <MenuTabs />
      <Ribbon />
      <div className="h-[881px] shrink-0 flex">
        <LeftPanel />
        <div className="w-[3px] bg-[#dfe8f3] shrink-0" />
        <div className="flex-1 flex flex-col min-w-0">
          <Dashboard />
          <div className="flex-1 flex min-h-0 bg-[#c8d8ec]">
            <CenterCol />
            <RightCol />
          </div>
        </div>
      </div>
      <StatusBar />
    </div>
  );
}
